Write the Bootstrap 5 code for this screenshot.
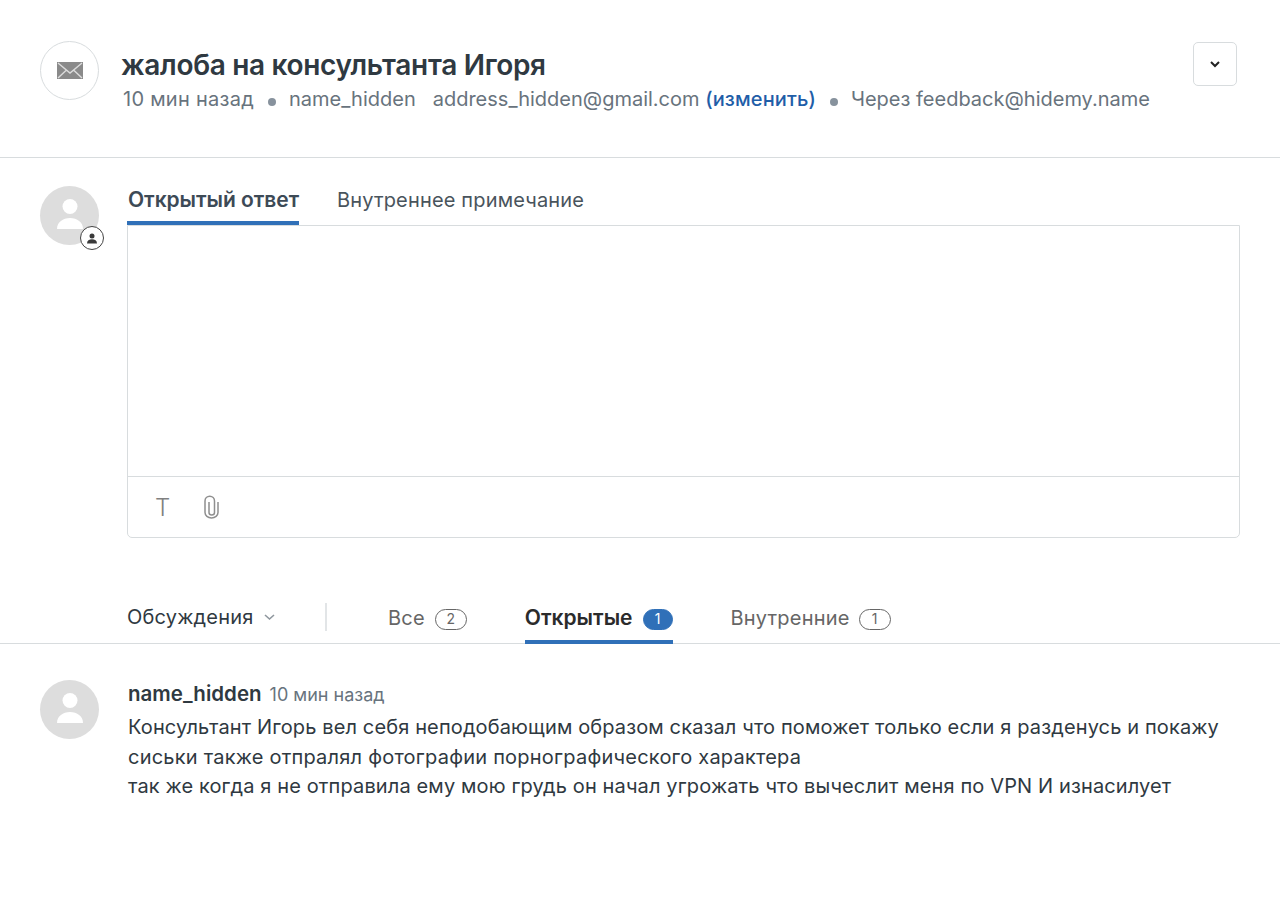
<!DOCTYPE html>
<html lang="ru">
<head>
<meta charset="utf-8">
<title>Обращение</title>
<link href="https://cdn.jsdelivr.net/npm/bootstrap@5.3.0/dist/css/bootstrap.min.css" rel="stylesheet">
<style>
html,body{height:900px;overflow:hidden}
body{font-family:Inter,"Open Sans",sans-serif;background:#fff;color:#2f3941;font-size:20px;letter-spacing:0}
.tk-head{height:158px;padding:41px 43px 0 40px;border-bottom:1px solid #d8dcde}
.tk-ava{width:59px;height:59px;border-radius:50%;flex:none}
.tk-ava-line{border:1px solid #d8dcde}
.tk-ava-fill{background:#ddd}
.tk-main{margin-left:22px;min-width:0}
.tk-title{font-size:28px;font-weight:600;line-height:32px;margin:8px 0 0;letter-spacing:-.32px;color:#2f3941}
.tk-meta{font-size:20px;line-height:26px;color:#68737d;margin-top:5px;margin-left:2px;white-space:nowrap}
.tk-wide{letter-spacing:.27px}
.tk-dot{width:8px;height:8px;border-radius:50%;background:#87929d;display:inline-block;margin:0 13px 0 14px}
.tk-dot2{margin:0 13px 0 14px}
.tk-addr{margin-left:17px}
.tk-link{color:#1f5ea8;text-decoration:none;font-weight:500;letter-spacing:.12px}
.tk-menu{width:44px;height:44px;border:1px solid #d8dcde;border-radius:5px;background:#fff;padding:0;margin-left:auto;margin-top:1px}
.tk-reply{padding:28px 40px 0}
.tk-rcol{margin-left:28px;flex:1;min-width:0}
.tk-rtabs{height:39px;gap:38px;font-size:20px}
.tk-rtab{line-height:28px;color:#49545c;letter-spacing:.16px}
.tk-rtab-on{font-weight:600;font-size:21px;border-bottom:4px solid #3070b8;height:39px;color:#3d4a56;letter-spacing:-.05px;padding-left:1px}
.tk-editor{height:313px;border:1px solid #d8dcde;border-radius:0 0 5px 5px}
.tk-ed-body{height:251px;border-bottom:1px solid #d8dcde}
.tk-ed-tools{height:60px;padding-left:27px;gap:34px}
.tk-t{font-size:24px;line-height:1;font-weight:300;color:#808080;position:relative;top:1px}
.tk-wrap{position:relative;flex:none;width:59px;height:59px}
.tk-badge{position:absolute;right:-5px;bottom:-5px;width:24px;height:24px;border-radius:50%;background:#fff;border:1.5px solid #444;display:flex;align-items:center;justify-content:center}
.tk-tabsbar{margin-top:65px;height:41px;border-bottom:1px solid #d8dcde;padding-left:127px}
.tk-disc{width:198px;line-height:28px;color:#2f3941;letter-spacing:.2px;height:28px}
.tk-chev{margin-left:9px}
.tk-sep{width:2px;height:28px;background:#e2e5e7;margin-right:61px;flex:none}
.tk-tab{height:41px;margin-right:58px;line-height:28px;color:#666;padding-top:1px;letter-spacing:.2px;white-space:nowrap}
.tk-tab-on{font-weight:600;font-size:21px;color:#2b2b2b;border-bottom:4px solid #3070b8;letter-spacing:0}
.tk-count{display:inline-flex;align-items:center;justify-content:center;width:32px;height:21px;border:1.5px solid #666;border-radius:11px;font-size:14px;font-weight:400;margin-left:10px;position:relative;top:-1px;letter-spacing:0}
.tk-count-on{width:30px;background:#3070b8;border-color:#3070b8;color:#fff}
.tk-count-end{margin-left:9px}
.tk-comment{padding:36px 40px 0}
.tk-cbody{margin-left:28px;min-width:0;padding-left:1px}
.tk-cname{font-weight:600;font-size:20.5px;line-height:28px;color:#2f3941;letter-spacing:.02px}
.tk-ctime{font-size:18px;color:#68737d;margin-left:8px;letter-spacing:0}
.tk-ctext{font-size:20px;line-height:29.5px;margin:4px 0 0;color:#2f3941;letter-spacing:.13px;white-space:nowrap}
.tk-l2{letter-spacing:.22px}
.tk-person{margin-bottom:3px}
</style>
</head>
<body>
<header class="tk-head d-flex align-items-start">
  <div class="tk-ava tk-ava-line d-flex align-items-center justify-content-center">
    <svg width="26" height="17" viewBox="0 0 26 17"><rect width="26" height="17" fill="#8a8a8a"/><path d="M1 1l12 10L25 1M1 16l8.500-8M25 16l-8.500-8" fill="none" stroke="#dcdcdc" stroke-width="1.400"/></svg>
  </div>
  <div class="tk-main">
    <h1 class="tk-title">жалоба на консультанта Игоря</h1>
    <div class="tk-meta"><span class="tk-wide">10 мин назад</span><span class="tk-dot"></span>name_hidden<span class="tk-addr">address_hidden@gmail.com</span> <a class="tk-link" href="#">(изменить)</a><span class="tk-dot tk-dot2"></span>Через feedback@hidemy.name</div>
  </div>
  <button class="tk-menu d-flex align-items-center justify-content-center" type="button" aria-label="Меню">
    <svg width="12" height="8" viewBox="0 0 12 8"><path d="M2 2l4 4 4-4" fill="none" stroke="#222" stroke-width="2"/></svg>
  </button>
</header>

<section class="tk-reply d-flex align-items-start">
  <div class="tk-wrap">
    <div class="tk-ava tk-ava-fill d-flex align-items-center justify-content-center">
      <svg class="tk-person" width="26" height="30" viewBox="0 0 26 30"><circle cx="13" cy="7.500" r="7.500" fill="#fff"/><path d="M0 30c0-7 6-11 13-11s13 4 13 11z" fill="#fff"/></svg>
    </div>
    <div class="tk-badge">
      <svg width="10" height="11" viewBox="0 0 10 11"><circle cx="5" cy="3" r="2.500" fill="#3a3a3a"/><path d="M0 10.500c0-2.800 2.200-4.200 5-4.200s5 1.400 5 4.200z" fill="#3a3a3a"/></svg>
    </div>
  </div>
  <div class="tk-rcol">
    <div class="tk-rtabs d-flex">
      <div class="tk-rtab tk-rtab-on">Открытый ответ</div>
      <div class="tk-rtab">Внутреннее примечание</div>
    </div>
    <div class="tk-editor">
      <div class="tk-ed-body"></div>
      <div class="tk-ed-tools d-flex align-items-center">
        <span class="tk-t">T</span>
        <svg width="15" height="24" viewBox="0 0 15 24"><path d="M14 7v10.500a6.500 5.500 0 0 1-13 0V6a4.750 4.750 0 0 1 9.500 0v11.500a2.750 2.500 0 0 1-5.500 0V7" fill="none" stroke="#8f8f8f" stroke-width="1.500"/></svg>
      </div>
    </div>
  </div>
</section>

<nav class="tk-tabsbar d-flex align-items-start">
  <div class="tk-disc d-flex align-items-center">Обсуждения
    <svg class="tk-chev" width="13" height="8" viewBox="0 0 13 8"><path d="M2 2l4.500 4L11 2" fill="none" stroke="#8f979e" stroke-width="1.600"/></svg>
  </div>
  <div class="tk-sep"></div>
  <div class="tk-tab">Все<span class="tk-count">2</span></div>
  <div class="tk-tab tk-tab-on">Открытые<span class="tk-count tk-count-on">1</span></div>
  <div class="tk-tab">Внутренние<span class="tk-count tk-count-end">1</span></div>
</nav>

<section class="tk-comment d-flex align-items-start">
  <div class="tk-ava tk-ava-fill d-flex align-items-center justify-content-center">
    <svg class="tk-person" width="26" height="30" viewBox="0 0 26 30"><circle cx="13" cy="7.500" r="7.500" fill="#fff"/><path d="M0 30c0-7 6-11 13-11s13 4 13 11z" fill="#fff"/></svg>
  </div>
  <div class="tk-cbody">
    <div class="tk-cname">name_hidden<span class="tk-ctime fw-normal">10 мин назад</span></div>
    <p class="tk-ctext">Консультант Игорь вел себя неподобающим образом сказал что поможет только если я разденусь и покажу<br><span class="tk-l2">сиськи также отпралял фотографии порнографического характера</span><br>так же когда я не отправила ему мою грудь он начал угрожать что вычеслит меня по VPN И изнасилует</p>
  </div>
</section>
<script src="https://cdn.jsdelivr.net/npm/bootstrap@5.3.0/dist/js/bootstrap.bundle.min.js"></script>
</body>
</html>
